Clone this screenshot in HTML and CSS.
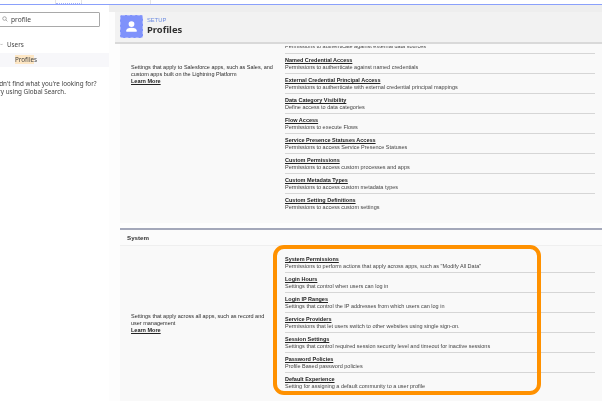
FILE: index.html
```html
<!DOCTYPE html>
<html lang="en">
<head>
<meta charset="utf-8">
<title>Profiles | Setup</title>
<link rel="stylesheet" href="styles.css">
</head>
<body>
<div class="topbar"><div class="tab tab-a"></div><div class="tab tab-b"></div><div class="tab tab-c"></div></div>
<div class="shell">
  <aside class="sidebar">
    <div class="search">
      <svg class="search-icon" viewBox="0 0 10 10"><circle cx="4.2" cy="4.2" r="3" fill="none" stroke="#777" stroke-width="1"/><path d="M6.5 6.5 9 9" stroke="#777" stroke-width="1"/></svg>
      <span>profile</span>
    </div>
    <div class="tree-parent"><svg class="chev" viewBox="0 0 6 4"><path d="M.7.7 3 3l2.3-2.3" fill="none" stroke="#666" stroke-width=".8"/></svg>Users</div>
    <div class="tree-child"><span><mark>Profile</mark>s</span></div>
    <p class="notfound">Didn't find what you're looking for?<br><span class="try">Try using Global Search.</span></p>
  </aside>
  <main class="main">
    <header class="page-head">
      <div class="page-icon">
        <svg viewBox="0 0 24 24"><circle cx="12" cy="9.2" r="3.3" fill="#fff"/><path d="M5.8 17.2c0-2.6 2.6-3.9 6.2-3.9s6.2 1.3 6.2 3.9c0 .5-.3.8-.8.8H6.6c-.5 0-.8-.3-.8-.8z" fill="#fff"/></svg>
      </div>
      <div>
        <div class="eyebrow">SETUP</div>
        <h1>Profiles</h1>
      </div>
    </header>
    <div class="scroll">
      <section class="card apps">
        <div class="intro intro-apps">
          <p>Settings that apply to Salesforce apps, such as Sales, and custom apps built on the Lightning Platform</p>
          <a>Learn More</a>
        </div>
        <ul class="rows">
          <li class="cut"><span>Permissions to authenticate against external data sources</span></li>
          <li><b>Named Credential Access</b><span>Permissions to authenticate against named credentials</span></li>
          <li><b>External Credential Principal Access</b><span>Permissions to authenticate with external credential principal mappings</span></li>
          <li><b>Data Category Visibility</b><span>Define access to data categories</span></li>
          <li><b>Flow Access</b><span>Permissions to execute Flows</span></li>
          <li><b>Service Presence Statuses Access</b><span>Permissions to access Service Presence Statuses</span></li>
          <li><b>Custom Permissions</b><span>Permissions to access custom processes and apps</span></li>
          <li><b>Custom Metadata Types</b><span>Permissions to access custom metadata types</span></li>
          <li><b>Custom Setting Definitions</b><span>Permissions to access custom settings</span></li>
        </ul>
      </section>
      <section class="system">
        <h2>System</h2>
        <div class="card sys-body">
          <div class="intro intro-sys">
            <p>Settings that apply across all apps, such as record and user management</p>
            <a>Learn More</a>
          </div>
          <ul class="rows">
            <li><b>System Permissions</b><span>Permissions to perform actions that apply across apps, such as "Modify All Data"</span></li>
            <li><b>Login Hours</b><span>Settings that control when users can log in</span></li>
            <li><b>Login IP Ranges</b><span>Settings that control the IP addresses from which users can log in</span></li>
            <li><b>Service Providers</b><span>Permissions that let users switch to other websites using single sign-on.</span></li>
            <li><b>Session Settings</b><span>Settings that control required session security level and timeout for inactive sessions</span></li>
            <li><b>Password Policies</b><span>Profile Based password policies</span></li>
            <li><b>Default Experience</b><span>Setting for assigning a default community to a user profile</span></li>
          </ul>
          <div class="callout"></div>
        </div>
      </section>
    </div>
  </main>
</div>
</body>
</html>
```
FILE: styles.css
```css
* { box-sizing: border-box; }
html, body { margin: 0; height: 100%; }
body {
  width: 602px;
  height: 401px;
  overflow: hidden;
  background: #fff;
  font-family: "Liberation Sans", Arial, sans-serif;
  color: #2b2b2b;
}
.topbar {
  display: flex;
  height: 5px;
  border-bottom: 1.5px solid #8aa0fb;
  background: #fff;
}
.tab { height: 3.5px; border-right: 1px solid #e4e4e4; }
.tab-a { width: 56px; }
.tab-b { width: 26px; border-bottom: 1px dotted #a9b6fb; }
.tab-c { width: 69px; }
.shell { display: flex; height: 396px; }
.sidebar {
  width: 109px;
  flex: none;
  padding-top: 6.5px;
  overflow: hidden;
  font-family: "Noto Sans", sans-serif;
  font-size: 6.3px;
  color: #444;
  filter: blur(.35px);
}
.search {
  display: flex;
  align-items: center;
  gap: 3px;
  height: 15px;
  width: 109px;
  margin-left: -9px;
  padding-left: 9px;
  border: 1.3px solid #a9a9a9;
  border-radius: 1px;
  font-size: 6.6px;
}
.search-icon { width: 6px; height: 6px; margin-left: 1px; }
.tree-parent {
  display: flex;
  align-items: center;
  gap: 4px;
  height: 12px;
  margin-top: 12px;
}
.chev { width: 3px; height: 3px; }
.tree-child {
  height: 14px;
  margin-top: 2px;
  padding-left: 15px;
  line-height: 14px;
  background: #f7f7fa;
}
mark { background: #fde6c4; color: inherit; }
.notfound {
  margin: 13px 0 0 -7px;
  line-height: 8px;
  white-space: nowrap;
}
.try { margin-left: 2px; }
.main {
  flex: 1;
  min-width: 0;
  padding-top: 6.5px;
  background: linear-gradient(#eeeeee 0, #eeeeee 7px, #fdfdfd 7px);
  padding-left: 6px;
}
.page-head {
  display: flex;
  align-items: center;
  gap: 4px;
  height: 32px;
  padding-left: 5px;
  background: #f2f2f2;
  border-bottom: 2px solid #d9d9d9;
  filter: blur(.35px);
}
.page-icon {
  width: 23px;
  height: 23px;
  border-radius: 2px;
  background: #7f92fb;
  border: 1px dashed #a9b5fc;
}
.page-icon svg { display: block; width: 100%; height: 100%; }
.eyebrow { font-size: 5.8px; line-height: 7px; color: #6d8ce0; }
h1 {
  margin: 0;
  font-family: "Noto Sans", sans-serif;
  font-size: 9.4px;
  line-height: 12px;
  font-weight: 700;
  color: #303030;
}
.scroll {
  height: 358px;
  overflow: hidden;
  padding-left: 5px;
  font-size: 5.5px;
  filter: blur(.35px);
}
.card { display: flex; background: #f9f9f9; position: relative; }
.apps { height: 179.5px; overflow: hidden; }
.intro { width: 165px; flex: none; padding: 0 11px; line-height: 7px; }
.intro p { margin: 0; }
.intro a { font-weight: 700; text-decoration: underline; color: #222; }
.intro-apps { padding-top: 20px; }
.intro-sys { padding-top: 60px; }
.rows { list-style: none; margin: 0; padding: 0; width: 310px; }
.rows li {
  display: flex;
  flex-direction: column;
  height: 20px;
  padding-top: 3.5px;
  line-height: 7px;
  border-bottom: 1px solid #d6d6d6;
  white-space: nowrap;
}
.rows li:last-child { border-bottom: 0; }
.rows b { font-weight: 700; text-decoration: underline; color: #222; }
.rows span { color: #444; }
.rows .cut { height: 10px; padding-top: 2.5px; }
.rows .cut span { height: 4px; overflow: hidden; line-height: 1px; }
.system { margin-top: 5px; border-top: 2px solid #a4a8ba; }
h2 {
  margin: 0;
  height: 16px;
  padding-left: 7px;
  font-size: 6.2px;
  line-height: 16px;
  color: #333;
  background: #fbfbfb;
  border-bottom: 1px solid #efefef;
}
.sys-body { height: 160px; padding-top: 6.5px; }
.callout {
  position: absolute;
  left: 153px;
  top: -1px;
  width: 268px;
  height: 150px;
  border: 4px solid #ff9100;
  border-radius: 11px;
}
```
